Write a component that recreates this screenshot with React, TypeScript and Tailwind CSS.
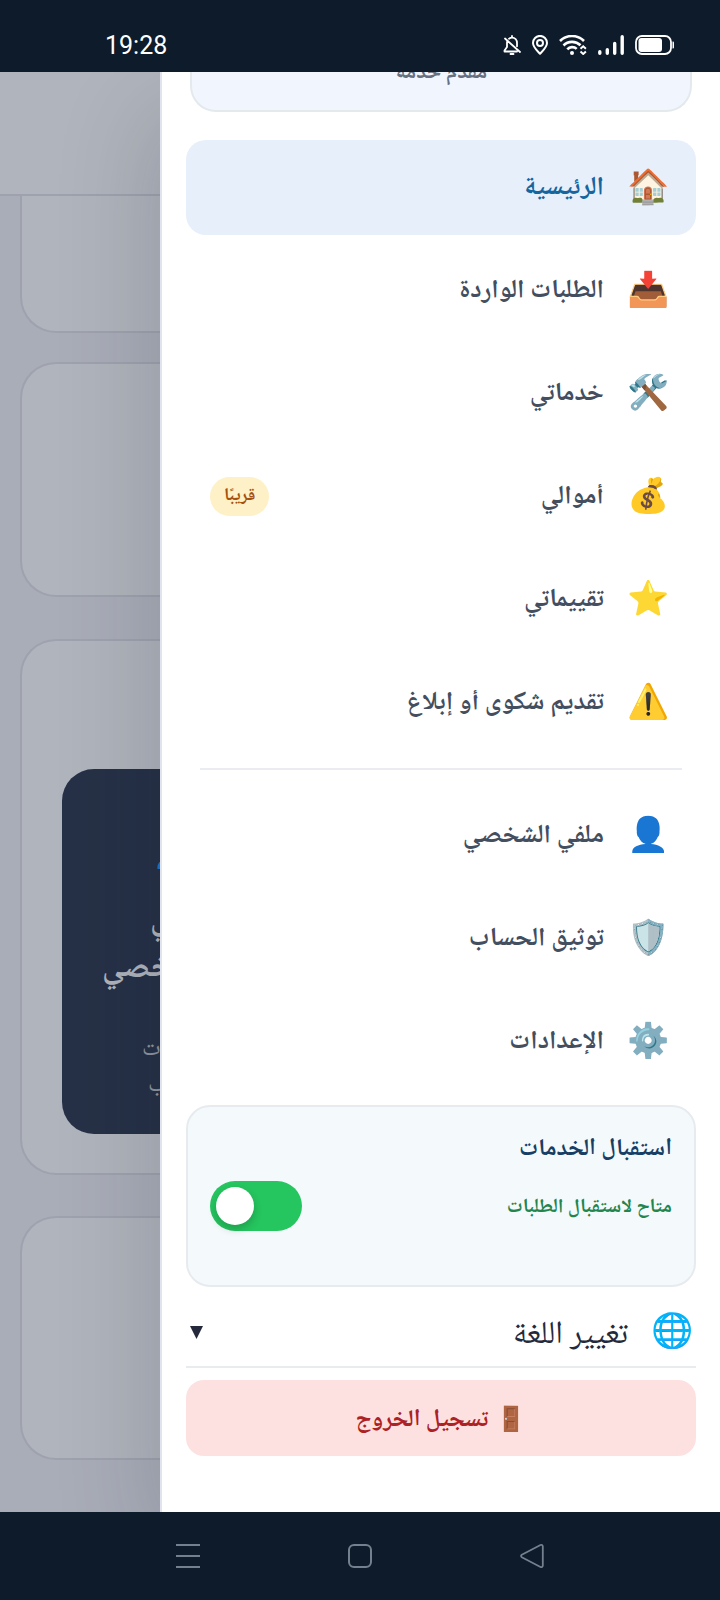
import { useState } from "react";

type Item = { icon: string; label: string; active?: boolean; badge?: string };

const mainItems: Item[] = [
  { icon: "🏠", label: "الرئيسية", active: true },
  { icon: "📥", label: "الطلبات الواردة" },
  { icon: "🛠️", label: "خدماتي" },
  { icon: "💰", label: "أموالي", badge: "قريبًا" },
  { icon: "⭐", label: "تقييماتي" },
  { icon: "⚠️", label: "تقديم شكوى أو إبلاغ" },
];

const accountItems: Item[] = [
  { icon: "👤", label: "ملفي الشخصي" },
  { icon: "🛡️", label: "توثيق الحساب" },
  { icon: "⚙️", label: "الإعدادات" },
];

function StatusBar() {
  return (
    <header className="flex h-[72px] shrink-0 items-end justify-between bg-[#0d1b2a] pr-[45px] pb-[10px] pl-[105px] text-white">
      <time className="font-['Roboto',sans-serif] text-[25px] leading-8">19:28</time>
      <div className="flex items-center gap-[11px] pb-[7px]">
        <svg className="h-5 w-[18px]" viewBox="0 0 18 20" fill="none" stroke="currentColor" strokeWidth="1.8" strokeLinecap="round" strokeLinejoin="round">
          <path d="M9 1v1.5M6 3.8C7 3 8 2.6 9 2.6c3 0 5 2.2 5 5.4v3.2M4.2 6.2C4 6.8 4 7.4 4 8v4L1.5 15.5v1H14M2 3.5l15 13.5M7.5 19h3" />
        </svg>
        <svg className="h-5 w-4" viewBox="0 0 16 20" fill="none" stroke="currentColor" strokeWidth="2">
          <path d="M8 18.8C4.5 15 1 11.8 1 7.9a7 7 0 0 1 14 0c0 3.9-3.5 7.1-7 10.9Z" strokeLinejoin="round" />
          <circle cx="8" cy="8" r="3" />
        </svg>
        <svg className="h-5 w-7" viewBox="0 0 28 20" fill="none" stroke="currentColor" strokeWidth="2.6">
          <path d="M1 6a17 17 0 0 1 24 0M4.5 10.5a12 12 0 0 1 17-.2M8.3 14.3a6.500 6.500 0 0 1 9.400-.4" />
          <circle cx="13" cy="18" r="2" fill="currentColor" stroke="none" />
          <path d="m21.5 13.7 2.7-2.4 2.7 2.4M21.5 16.6l2.7 2.4 2.7-2.4" strokeWidth="2" />
        </svg>
        <svg className="h-5 w-[26px]" viewBox="0 0 26 20" fill="none" stroke="currentColor" strokeWidth="3.4" strokeLinecap="round">
          <path d="M1.8 18.2v-1.5M9.300 18.200v-3.400M16.700 18.200V8.500M24.200 18.200V1.800" />
        </svg>
        <svg className="h-5 w-10" viewBox="0 0 40 20" fill="none">
          <rect x="1" y="1" width="35" height="18" rx="6" stroke="currentColor" strokeWidth="1.8" />
          <rect x="3.5" y="3" width="23.5" height="14" rx="3" fill="currentColor" />
          <path d="M37.5 6.5h.5a1 1 0 0 1 1 1v5a1 1 0 0 1-1 1h-.5Z" fill="currentColor" />
        </svg>
      </div>
    </header>
  );
}

const card = "ml-5 shrink-0 border-2 border-r-0 border-[#9fa2ae] bg-[#b0b4bc]";

function DimmedPage() {
  return (
    <div aria-hidden="true" className="flex w-40 shrink-0 flex-col overflow-hidden bg-[#a9adb8]">
      <div className="h-[124px] shrink-0 border-b-2 border-[#9fa2ae] bg-[#b0b4bc]" />
      <div className={`${card} h-[137px] rounded-bl-[36px] border-t-0`} />
      <div className={`${card} mt-[29px] h-[235px] rounded-l-[36px]`} />
      <div className={`${card} mt-[42px] h-[536px] rounded-l-[36px] pt-32 pl-10`}>
        <div className="flex h-[365px] flex-col items-start overflow-hidden rounded-l-[32px] bg-[#263147] pt-10 pl-10 text-[#b0b4bc]">
          <span className="ml-12 text-[48px] leading-[64px]">👤</span>
          <span className="mt-6 ml-12 text-[32px] leading-[48px] font-bold whitespace-nowrap">ملفي</span>
          <span className="text-[32px] leading-[48px] font-bold whitespace-nowrap">الشخصي</span>
          <span className="mt-[38px] ml-10 text-[24px] leading-9 whitespace-nowrap text-[#8f96a3]">البيانات</span>
          <span className="ml-[46px] text-[24px] leading-9 whitespace-nowrap text-[#8f96a3]">والحساب</span>
        </div>
      </div>
      <div className={`${card} mt-[41px] h-[244px] rounded-l-[36px]`} />
    </div>
  );
}

function MenuLink({ icon, label, active, badge }: Item) {
  return (
    <a
      href="#"
      aria-current={active ? "page" : undefined}
      className={`flex h-[95px] items-center gap-5 rounded-[20px] px-6 ${active ? "bg-[#e7effb] text-[#15659f]" : "text-[#434e5f]"}`}
    >
      <span className="flex w-12 justify-center pb-[6px] text-[34px] leading-10">{icon}</span>
      <span className="text-[26px] leading-10 font-bold">{label}</span>
      {badge && (
        <span className="mr-auto rounded-full bg-[#fef1c7] px-[14px] text-[18px] leading-[39px] font-bold text-[#a4500f]">{badge}</span>
      )}
    </a>
  );
}

function Drawer() {
  const [available, setAvailable] = useState(true);
  return (
    <aside className="z-10 flex min-w-0 flex-1 flex-col border-l-2 border-[#e1e4ee] bg-white px-6 shadow-[-10px_40px_90px_rgba(15,23,42,0.16)]">
      <div className="mr-1 ml-1 flex h-10 shrink-0 justify-center overflow-hidden rounded-b-[26px] border-2 border-t-0 border-[#e4e9ee] bg-[#f1f6fe]">
        <span className="-mt-5 text-[22px] leading-10 font-bold text-[#66707f]">مقدم خدمة</span>
      </div>

      <nav className="mt-7 flex flex-col gap-2">
        {mainItems.map((item) => (
          <MenuLink key={item.label} {...item} />
        ))}
        <hr className="mx-[14px] my-[10px] border-t-2 border-[#ebecf1]" />
        {accountItems.map((item) => (
          <MenuLink key={item.label} {...item} />
        ))}
      </nav>

      <section className="mt-4 h-[182px] shrink-0 rounded-[24px] border-2 border-[#e7ebef] bg-[#f4f9fc] px-[22px] pt-[22px]">
        <h2 className="text-[24px] leading-10 font-bold text-[#173f66]">استقبال الخدمات</h2>
        <label className="mt-3 flex items-center justify-between">
          <span className="pt-1 text-[20px] leading-10 font-bold text-[#23854e]">متاح لاستقبال الطلبات</span>
          <input
            type="checkbox"
            role="switch"
            checked={available}
            onChange={() => setAvailable(!available)}
            className="flex h-[50px] w-[92px] appearance-none items-center justify-start rounded-full bg-gray-300 px-[6px] before:size-[38px] before:rounded-full before:bg-white before:shadow-[0_4px_8px_rgba(0,0,0,0.2)] checked:justify-end checked:bg-[#25c55f]"
          />
        </label>
      </section>

      <button type="button" className="mt-2 flex h-[73px] shrink-0 items-center justify-between border-b-2 border-[#e8ecee] text-[#242a3c]">
        <span className="flex items-center gap-5">
          <span className="flex w-12 justify-center pb-1 text-[34px] leading-10">🌐</span>
          <span className="pt-2 text-[32px] leading-10">تغيير اللغة</span>
        </span>
        <svg className="mt-1 ml-1 h-[13px] w-[13px]" viewBox="0 0 13 13" fill="currentColor">
          <path d="M0 0h13L6.5 13Z" />
        </svg>
      </button>

      <button type="button" className="mt-3 mb-[56px] flex h-[76px] shrink-0 items-center justify-center gap-2 rounded-[18px] bg-[#fde1e0] text-[24px] leading-10 font-bold text-[#ad2023]">
        <span>🚪</span>
        <span className="pt-1">تسجيل الخروج</span>
      </button>
    </aside>
  );
}

function SystemNav() {
  const icon = "h-[26px] w-[26px]";
  return (
    <nav className="flex h-[88px] shrink-0 items-center justify-around bg-[#0d1b2a] px-[102px] text-[#74808d]">
      <button type="button" aria-label="التطبيقات الأخيرة">
        <svg className={icon} viewBox="0 0 26 26" stroke="currentColor" strokeWidth="2">
          <path d="M1 2h24M1 13h24M1 24h24" />
        </svg>
      </button>
      <button type="button" aria-label="الشاشة الرئيسية">
        <svg className={icon} viewBox="0 0 26 26" fill="none" stroke="currentColor" strokeWidth="2">
          <rect x="2" y="2" width="22" height="22" rx="5" />
        </svg>
      </button>
      <button type="button" aria-label="رجوع">
        <svg className={icon} viewBox="0 0 26 26" fill="none" stroke="currentColor" strokeWidth="1.8" strokeLinejoin="round">
          <path d="M21.5 2 2.8 11.8c-1 .6-1 1.8 0 2.4L21.5 24c1.1.5 2.3-.2 2.3-1.5v-19c0-1.300-1.200-2-2.300-1.500Z" />
        </svg>
      </button>
    </nav>
  );
}

export default function App() {
  return (
    <div className="flex min-h-screen flex-col font-['Noto_Naskh_Arabic_UI','Noto_Naskh_Arabic','Noto_Sans',serif]">
      <StatusBar />
      <main className="flex flex-1 overflow-hidden">
        <DimmedPage />
        <div dir="rtl" className="contents">
          <Drawer />
        </div>
      </main>
      <SystemNav />
    </div>
  );
}
